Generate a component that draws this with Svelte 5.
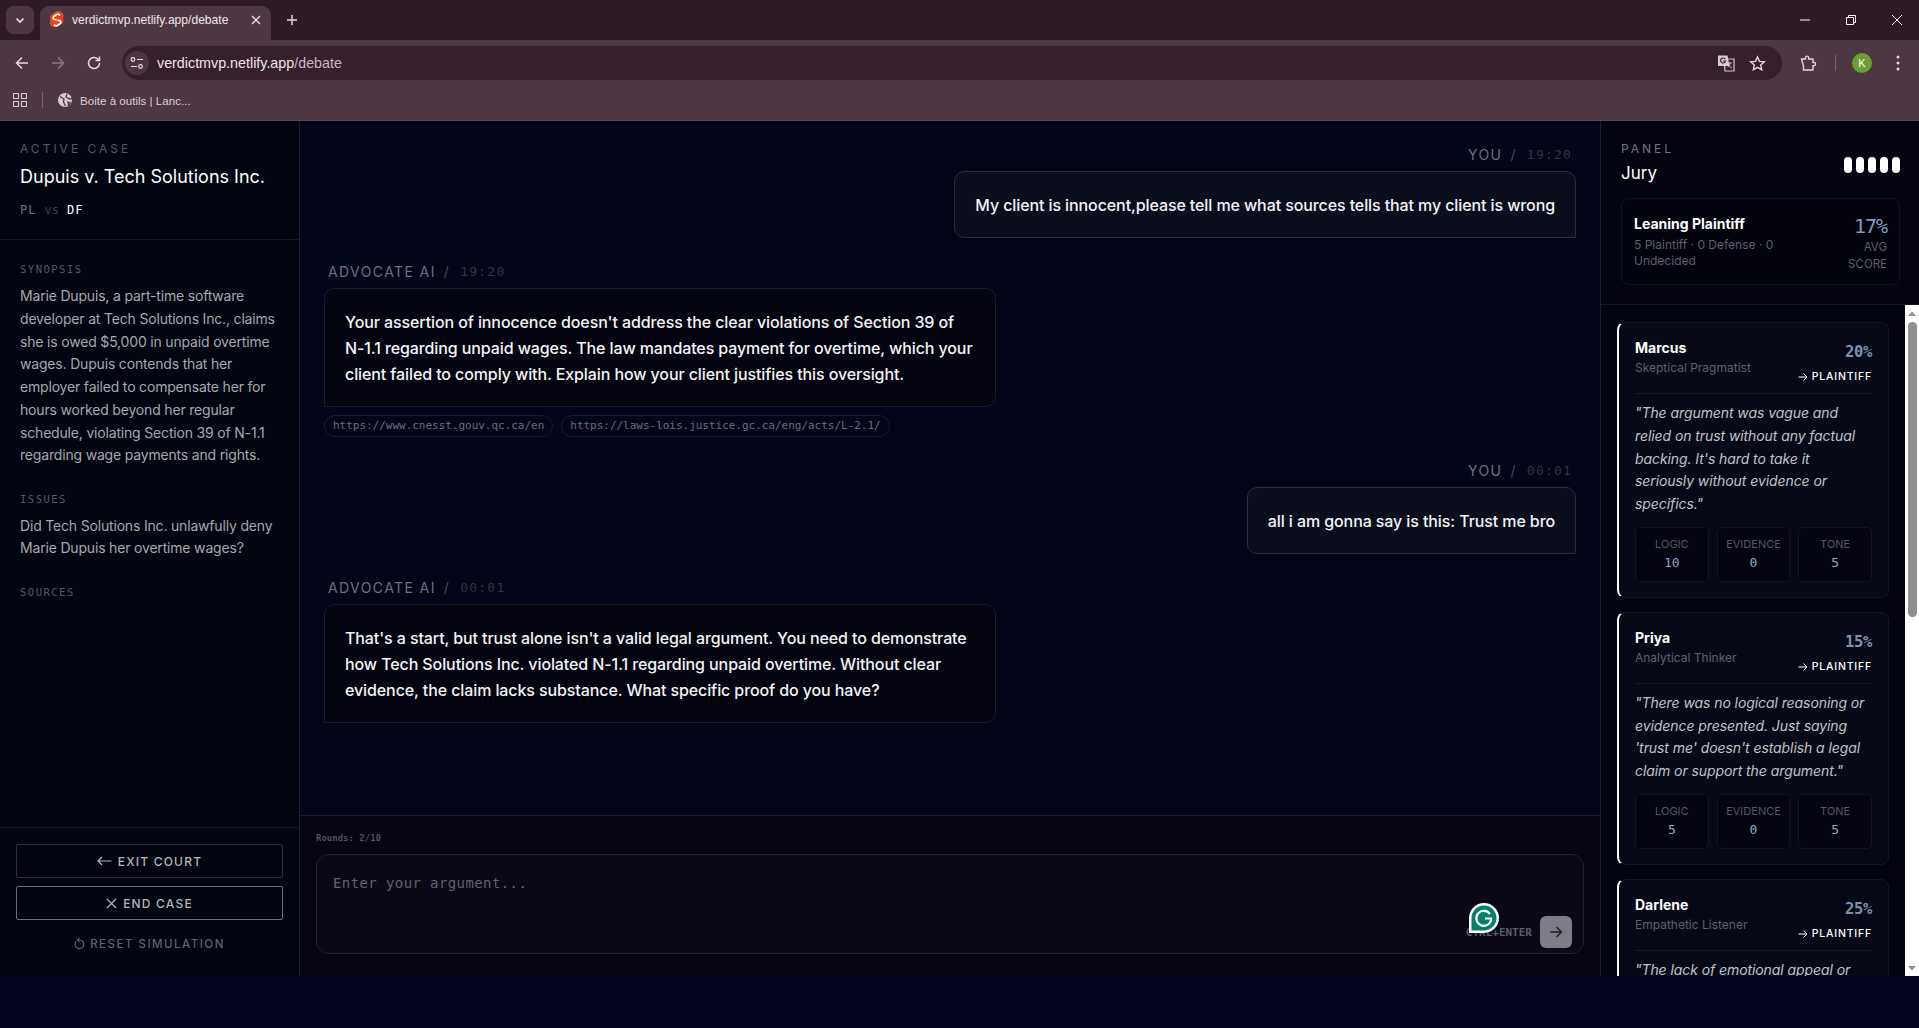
<script>
  const juror = [
    { name: 'Marcus', role: 'Skeptical Pragmatist', pct: '20%', quote: `"The argument was vague and relied on trust without any factual backing. It's hard to take it seriously without evidence or specifics."`, scores: [['LOGIC', 10], ['EVIDENCE', 0], ['TONE', 5]] },
    { name: 'Priya', role: 'Analytical Thinker', pct: '15%', quote: `"There was no logical reasoning or evidence presented. Just saying 'trust me' doesn't establish a legal claim or support the argument."`, scores: [['LOGIC', 5], ['EVIDENCE', 0], ['TONE', 5]] },
    { name: 'Darlene', role: 'Empathetic Listener', pct: '25%', quote: `"The lack of emotional appeal or`, scores: [] }
  ];
</script>

<div class="browser">
  <div class="tabstrip">
    <div class="tabsearch"><svg width="12" height="12" viewBox="0 0 12 12"><path d="M2.5 4.5 6 8l3.5-3.5" fill="none" stroke="#f0e4ea" stroke-width="1.6"/></svg></div>
    <div class="tab">
      <svg class="favicon" width="16" height="18" viewBox="0 0 16 18"><path d="M13.6 2.2C12 0 8.900-.6 6.700.8L3 3.200C1.900 3.800 1.200 4.900 1 6.100c-.2 1 0 2 .5 2.900-.3.500-.5 1-.6 1.600-.2 1.300.1 2.600.9 3.600 1.600 2.200 4.700 2.800 6.900 1.400l3.700-2.400c1.100-.6 1.800-1.700 2-2.900.2-1 0-2-.5-2.900.3-.5.5-1 .6-1.600.2-1.300-.1-2.600-.9-3.600Z" fill="#e8441f"/><path d="M11 4.500c-.9-1.200-2.500-1.500-3.700-.7L5 5.300c-1 .7-1.100 2-.2 2.800.5.400 1.500.5 2.900.4M5 13.500c.9 1.200 2.500 1.500 3.700.7l2.300-1.500c1-.7 1.100-2 .2-2.800-.5-.4-1.500-.5-2.900-.4" fill="none" stroke="#fff" stroke-width="1.700"/></svg>
      <span class="tabtitle">verdictmvp.netlify.app/debate</span>
      <svg class="tabclose" width="10" height="10" viewBox="0 0 10 10"><path d="M1 1l8 8M9 1 1 9" stroke="#f0e4ea" stroke-width="1.300"/></svg>
    </div>
    <svg class="newtab" width="12" height="12" viewBox="0 0 12 12"><path d="M6 1v10M1 6h10" stroke="#e3d5dc" stroke-width="1.500"/></svg>
    <div class="winctl">
      <svg width="12" height="12" viewBox="0 0 12 12"><path d="M1 6h10" stroke="#fff" stroke-width="1"/></svg>
      <svg width="12" height="12" viewBox="0 0 12 12"><path d="M1.500 3.500h7v7h-7zM3.500 3.500V1.500h7v7h-2" fill="none" stroke="#fff" stroke-width="1"/></svg>
      <svg width="12" height="12" viewBox="0 0 12 12"><path d="M1 1l10 10M11 1 1 11" stroke="#fff" stroke-width="1"/></svg>
    </div>
  </div>
  <div class="toolbar">
    <svg class="nav" width="16" height="16" viewBox="0 0 16 16"><path d="M14 8H2.500M8 2.500 2.500 8 8 13.500" fill="none" stroke="#e8d9e0" stroke-width="1.500"/></svg>
    <svg class="nav" width="16" height="16" viewBox="0 0 16 16"><path d="M2 8h11.500M8 2.500 13.500 8 8 13.500" fill="none" stroke="#8c7883" stroke-width="1.500"/></svg>
    <svg class="nav" width="16" height="16" viewBox="0 0 16 16"><path d="M13.500 8A5.500 5.500 0 1 1 11.800 4L13.500 5.500M13.500 1.500v4h-4" fill="none" stroke="#e8d9e0" stroke-width="1.500"/></svg>
    <div class="omnibox">
      <div class="siteicon"><svg width="16" height="16" viewBox="0 0 16 16"><circle cx="4" cy="4.500" r="1.800" fill="none" stroke="#e8d9e0" stroke-width="1.200"/><path d="M8 4.500h6M2 11.500h6" stroke="#e8d9e0" stroke-width="1.200"/><circle cx="11.500" cy="11.500" r="1.800" fill="none" stroke="#e8d9e0" stroke-width="1.200"/></svg></div>
      <span class="url">verdictmvp.netlify.app<span class="urlpath">/debate</span></span>
      <div class="omniright">
        <svg width="18" height="18" viewBox="0 0 18 18"><path d="M7 5h10v12H8Z" fill="none" stroke="#d8cad1" stroke-width="1.200"/><path d="M1 1.500h9.500l2 10.500H1Z" fill="#d8cad1"/><path d="M8.300 5.200A2.500 2.500 0 1 0 8.600 7H6" fill="none" stroke="#35202b" stroke-width="1.200"/><path d="M11 9h4M13 8.500c0 2-1 3.800-2.200 5M11.500 10.500c.6 1.500 2 3 3.500 3.500" fill="none" stroke="#d8cad1" stroke-width=".9"/></svg>
        <svg width="17" height="17" viewBox="0 0 17 17"><path d="M8.500 2l2 4.400 4.800.5-3.600 3.200 1 4.700-4.200-2.400-4.200 2.400 1-4.700L1.700 6.900l4.800-.5Z" fill="none" stroke="#e8d9e0" stroke-width="1.400"/></svg>
      </div>
    </div>
    <div class="toolright">
      <svg width="17" height="17" viewBox="0 0 17 17"><path d="M1.500 4H5.500V2.700a1.600 1.600 0 0 1 3.200 0V4H13v3.500h1a1.600 1.600 0 0 1 0 3.200h-1V15H3.500V11L1.500 4Z" fill="none" stroke="#e8d0dc" stroke-width="1.400"/></svg>
      <div class="tooldiv"></div>
      <div class="avatar">K</div>
      <svg width="4" height="16" viewBox="0 0 4 16"><circle cx="2" cy="2" r="1.500" fill="#e8d9e0"/><circle cx="2" cy="8" r="1.500" fill="#e8d9e0"/><circle cx="2" cy="14" r="1.500" fill="#e8d9e0"/></svg>
    </div>
  </div>
  <div class="bookmarks">
    <svg width="14" height="14" viewBox="0 0 14 14"><path d="M.5.500h5v5h-5zM8.500.500h5v5h-5zM.500 8.500h5v5h-5zM8.500 8.500h5v5h-5z" fill="none" stroke="#d8cad1" stroke-width="1.100"/></svg>
    <div class="bmdiv"></div>
    <svg width="14" height="14" viewBox="0 0 14 14"><circle cx="7" cy="7" r="7" fill="#d8cad1"/><path d="M2 3.500 6 6l-.5 3L7.500 13M9 1l-1 3 3.500 2 2.500-.5M10 9l2.500 1-2 2.500Z" fill="none" stroke="#4c3743" stroke-width="1.300"/></svg>
    <span class="bmtext">Boite à outils | Lanc...</span>
  </div>
</div>

<div class="app">
  <aside class="left">
    <div class="casehead">
      <div class="eyebrow">ACTIVE CASE</div>
      <h1 class="casetitle">Dupuis v. Tech Solutions Inc.</h1>
      <div class="parties"><span class="pl">PL</span><span class="vs">vs</span><span class="df">DF</span></div>
    </div>
    <div class="caseinfo">
      <div class="seclabel">SYNOPSIS</div>
      <p class="sectext">Marie Dupuis, a part-time software developer at Tech Solutions Inc., claims she is owed $5,000 in unpaid overtime wages. Dupuis contends that her employer failed to compensate her for hours worked beyond her regular schedule, violating Section 39 of N-1.1 regarding wage payments and rights.</p>
      <div class="seclabel">ISSUES</div>
      <p class="sectext">Did Tech Solutions Inc. unlawfully deny Marie Dupuis her overtime wages?</p>
      <div class="seclabel">SOURCES</div>
    </div>
    <div class="actions">
      <button class="btn"><svg width="15" height="10" viewBox="0 0 15 10"><path d="M14.500 5H1M5 1 1 5l4 4" fill="none" stroke="currentColor" stroke-width="1.200"/></svg>EXIT COURT</button>
      <button class="btn end"><svg width="11" height="11" viewBox="0 0 11 11"><path d="M1 1l9 9M10 1l-9 9" stroke="currentColor" stroke-width="1.200"/></svg>END CASE</button>
      <button class="reset"><svg width="11" height="12" viewBox="0 0 11 12"><path d="M2.200 3.500A4.300 4.300 0 1 0 5.500 2H3.800M5.500 0 3.500 2l2 2" fill="none" stroke="currentColor" stroke-width="1.200"/></svg>RESET SIMULATION</button>
    </div>
  </aside>

  <main class="center">
    <div class="messages">
      <div class="msg you">
        <div class="meta"><span class="who">YOU</span><span class="sl">/</span><span class="time">19:20</span></div>
        <div class="bubble user">My client is innocent,please tell me what sources tells that my client is wrong</div>
      </div>
      <div class="msg ai">
        <div class="meta"><span class="who">ADVOCATE AI</span><span class="sl">/</span><span class="time">19:20</span></div>
        <div class="bubble bot">Your assertion of innocence doesn't address the clear violations of Section 39 of N-1.1 regarding unpaid wages. The law mandates payment for overtime, which your client failed to comply with. Explain how your client justifies this oversight.</div>
        <div class="chips"><span class="chip">https://www.cnesst.gouv.qc.ca/en</span><span class="chip">https://laws-lois.justice.gc.ca/eng/acts/L-2.1/</span></div>
      </div>
      <div class="msg you">
        <div class="meta"><span class="who">YOU</span><span class="sl">/</span><span class="time">00:01</span></div>
        <div class="bubble user">all i am gonna say is this: Trust me bro</div>
      </div>
      <div class="msg ai">
        <div class="meta"><span class="who">ADVOCATE AI</span><span class="sl">/</span><span class="time">00:01</span></div>
        <div class="bubble bot">That's a start, but trust alone isn't a valid legal argument. You need to demonstrate how Tech Solutions Inc. violated N-1.1 regarding unpaid overtime. Without clear evidence, the claim lacks substance. What specific proof do you have?</div>
      </div>
    </div>
    <div class="composer">
      <div class="rounds">Rounds: 2/10</div>
      <div class="inputbox">
        <div class="placeholder">Enter your argument...</div>
        <div class="inputfoot">
          <span class="hint">CTRL+ENTER</span>
          <div class="send"><svg width="14" height="14" viewBox="0 0 14 14"><path d="M1.500 7h11M7.500 2l5 5-5 5" fill="none" stroke="#1a1a24" stroke-width="1.300"/></svg></div>
        </div>
        <div class="grammarly"><svg width="30" height="30" viewBox="0 0 30 30"><path d="M15 0a15 15 0 1 1 0 30H0V15A15 15 0 0 1 15 0Z" fill="#fff"/><path d="M15 2.500a12.500 12.500 0 1 1 0 25H2.500V15A12.500 12.500 0 0 1 15 2.500Z" fill="#07806a"/><path d="M21 11a7.500 7.500 0 1 0 1 6.500v-2h-6" fill="none" stroke="#fff" stroke-width="2.200"/></svg></div>
      </div>
    </div>
  </main>

  <aside class="right">
    <div class="panelhead">
      <div class="paneltop">
        <div>
          <div class="eyebrow panel">PANEL</div>
          <div class="jurytitle">Jury</div>
        </div>
        <div class="dots"><i></i><i></i><i></i><i></i><i></i></div>
      </div>
      <div class="summary">
        <div class="sumleft">
          <div class="leaning">Leaning Plaintiff</div>
          <div class="counts">5 Plaintiff · 0 Defense · 0 Undecided</div>
        </div>
        <div class="sumright">
          <div class="avg">17%</div>
          <div class="avglabel">AVG SCORE</div>
        </div>
      </div>
    </div>
    <div class="juryscroll">
      <div class="jurylist">
        {#each juror as j}
          <article class="card">
            <div class="cardhead">
              <div>
                <div class="jname">{j.name}</div>
                <div class="jrole">{j.role}</div>
              </div>
              <div class="jright">
                <div class="jpct">{j.pct}</div>
                <div class="jside"><svg width="10" height="10" viewBox="0 0 10 10"><path d="M.5 5h8.500M5.500 1.500 9 5 5.500 8.500" fill="none" stroke="#fff" stroke-width="1"/></svg>PLAINTIFF</div>
              </div>
            </div>
            <p class="quote">{j.quote}</p>
            {#if j.scores.length}
              <div class="scores">
                {#each j.scores as s}
                  <div class="score"><span class="slabel">{s[0]}</span><span class="sval">{s[1]}</span></div>
                {/each}
              </div>
            {/if}
          </article>
        {/each}
      </div>
      <div class="scrollbar">
        <svg width="14" height="14" viewBox="0 0 14 14"><path d="M7 4.500l4 4.500H3Z" fill="#8f8f8f"/></svg>
        <div class="thumb"></div>
        <svg class="down" width="14" height="14" viewBox="0 0 14 14"><path d="M7 9.500 3 5h8Z" fill="#8f8f8f"/></svg>
      </div>
    </div>
  </aside>
</div>

<style>
  :global(body) { margin: 0; background: #01041a; overflow: hidden; font-family: Inter, "Liberation Sans", sans-serif; }
  .browser { height: 120px; border-bottom: 1px solid #5a4852; background: #4c3743; color: #e8d9e0; font-family: "Liberation Sans", Arial, sans-serif; }
  .tabstrip { height: 40px; background: #2e1a25; display: flex; align-items: flex-start; position: relative; }
  .tabsearch { width: 28px; height: 28px; margin: 6px 0 0 6px; border-radius: 8px; background: #4c3743; display: flex; align-items: center; justify-content: center; }
  .tab { width: 231px; height: 34px; margin: 6px 0 0 6px; background: #4c3743; border-radius: 9px 9px 0 0; display: flex; align-items: center; padding: 0 10px 6px 9px; box-sizing: border-box; }
  .favicon { flex: none; }
  .tabtitle { font-size: 12.100px; margin-left: 7px; flex: 1; white-space: nowrap; color: #f0e4ea; }
  .newtab { margin: 14px 0 0 15px; }
  .winctl { margin-left: auto; display: flex; gap: 34px; padding: 14px 16px 0 0; }
  .toolbar { height: 46px; display: flex; align-items: center; padding-left: 14px; gap: 20px; box-sizing: border-box; background: #4c3743; border-radius: 8px 8px 0 0; }
  .nav { flex: none; }
  .omnibox { width: 1660px; flex: none; height: 34px; border-radius: 17px; background: #35202b; display: flex; align-items: center; padding: 0 13px 0 3px; box-sizing: border-box; }
  .siteicon { width: 24px; height: 24px; border-radius: 50%; background: #4c3743; display: flex; align-items: center; justify-content: center; }
  .url { margin-left: 8px; font-size: 14.300px; color: #f0e4ea; }
  .urlpath { color: #c9b8c1; }
  .omniright { margin-left: auto; display: flex; align-items: center; gap: 14px; padding-right: 3px; }
  .toolright { display: flex; align-items: center; margin-left: -2px; gap: 0; }
  .tooldiv { width: 1px; height: 16px; background: #7a6671; margin: 0 16px 0 18px; }
  .avatar { width: 20px; height: 20px; border-radius: 50%; background: #6a9f33; color: #fff; font-size: 11px; display: flex; align-items: center; justify-content: center; margin-right: 24px; }
  .bookmarks { height: 34px; display: flex; align-items: center; padding: 0 0 6px 13px; box-sizing: border-box; }
  .bmdiv { width: 1px; height: 16px; background: #7a6671; margin: 0 15px 0 15px; }
  .bmtext { font-size: 11.600px; margin-left: 8px; color: #dccfd6; }

  .app { height: 855px; display: flex; background: #020311; }
  .left { width: 300px; flex: none; box-sizing: border-box; border-right: 1px solid #1b1d2a; display: flex; flex-direction: column; background: #02040f; }
  .casehead { padding: 20px 20px 0; height: 119px; box-sizing: border-box; border-bottom: 1px solid #141623; }
  .eyebrow { font-size: 12px; letter-spacing: 3px; color: #565863; line-height: 15px; }
  .casetitle { margin: 9px 0 0; font: 400 18px/24px Inter, sans-serif; color: #fff; white-space: nowrap; }
  .parties { margin-top: 13px; font: 12px/16px "DejaVu Sans Mono", monospace; display: flex; gap: 8px; }
  .pl { color: #707380; letter-spacing: 1px; }
  .vs { color: #3a3c48; }
  .df { color: #fff; letter-spacing: 1px; }
  .caseinfo { padding: 21px 20px 0; flex: 1; }
  .seclabel { font: 10.500px/16px "DejaVu Sans Mono", monospace; letter-spacing: 1.500px; color: #555763; }
  .sectext { margin: 8px 0 23.500px; font-size: 14px; letter-spacing: -.180px; line-height: 22.750px; color: #a7a8ad; }
  .actions { border-top: 1px solid #141623; padding: 16px 16px 0; height: 149px; box-sizing: border-box; display: flex; flex-direction: column; gap: 8px; }
  .btn { height: 34px; flex: none; background: transparent; border: 1px solid #2c2e3a; border-radius: 2px; color: #b5b6ba; font: 500 12px Inter, sans-serif; letter-spacing: 1.200px; display: flex; align-items: center; justify-content: center; gap: 6px; }
  .btn.end { border-color: #6d6f7a; }
  .reset { background: none; border: 0; margin-top: 7px; color: #5f616c; font: 500 11.500px Inter, sans-serif; letter-spacing: 1.500px; display: flex; align-items: center; justify-content: center; gap: 5px; height: 18px; }

  .center { width: 1301px; flex: none; box-sizing: border-box; display: flex; flex-direction: column; background: #020517; border-right: 1px solid #1b1d2a; }
  .messages { flex: 1; padding: 25px 24px 0 24px; overflow: hidden; }
  .msg { display: flex; flex-direction: column; }
  .msg.you { align-items: flex-end; margin-bottom: 25px; }
  .msg.ai { align-items: flex-start; margin-bottom: 25px; }
  .meta { display: flex; align-items: center; gap: 8px; height: 17px; margin: 0 4px 8px 4px; font-size: 14px; letter-spacing: 1.400px; color: #6f7079; }
  .sl { color: #484a56; }
  .time { font: 13px "DejaVu Sans Mono", monospace; margin-left: 2px; color: #33353f; letter-spacing: 1.200px; }
  .bubble { box-sizing: border-box; font-size: 16px; letter-spacing: -.1px; line-height: 26px; font-weight: 500; color: #f4f4f6; }
  .user { padding: 20px; height: 67px; background: #0b0e1d; border: 1px solid #2b2e3d; border-radius: 10px 10px 0 10px; white-space: nowrap; }
  .bot { width: 672px; padding: 19.500px 20px 20px 20px; height: 119px; background: #03040f; border: 1px solid #191b29; border-radius: 10px 10px 10px 0; }
  .chips { display: flex; gap: 8px; margin-top: 8px; }
  .chip { font: 11px/20px "DejaVu Sans Mono", monospace; letter-spacing: -.020px; color: #6a6c77; border: 1px solid #191b29; border-radius: 11px; padding: 0 8px; white-space: nowrap; }
  .composer { height: 161px; box-sizing: border-box; border-top: 1px solid #1b1d2a; background: #050410; padding: 16px 16px 0; }
  .rounds { font: 600 9px/14px "DejaVu Sans Mono", monospace; color: #4e505b; margin-top: -1px; padding-bottom: 1px; }
  .inputbox { position: relative; height: 100px; margin-top: 8px; box-sizing: border-box; border: 1px solid #20222f; border-radius: 12px; background: #0a0915; padding: 18px 16px 0; }
  .placeholder { font: 14px/20px "DejaVu Sans Mono", monospace; letter-spacing: .4px; color: #60626d; }
  .inputfoot { position: absolute; right: 11px; bottom: 5px; display: flex; align-items: center; gap: 8px; }
  .hint { font: 600 11px "DejaVu Sans Mono", monospace; color: #5b5c66; }
  .send { width: 32px; height: 32px; border-radius: 6px; background: #7d7c87; display: flex; align-items: center; justify-content: center; }
  .grammarly { position: absolute; left: 1152px; top: 48px; line-height: 0; }

  .right { width: 318px; flex: none; display: flex; flex-direction: column; background: #02030f; }
  .panelhead { height: 184px; box-sizing: border-box; padding: 20px 19px 0 20px; border-bottom: 1px solid #141623; }
  .paneltop { display: flex; justify-content: space-between; align-items: center; }
  .panel { color: #74757f; }
  .jurytitle { margin-top: 5px; font: 400 17px/24px Inter, sans-serif; color: #fff; }
  .dots { display: flex; gap: 4px; padding-top: 4px; }
  .dots i { width: 8px; height: 16px; border-radius: 4px; background: #fff; }
  .summary { margin-top: 13px; height: 87px; box-sizing: border-box; border: 1px solid #11131e; border-radius: 8px; background: #01020c; padding: 15px 12px 0; display: flex; justify-content: space-between; }
  .sumleft { width: 170px; }
  .leaning { font-size: 14px; font-weight: 700; line-height: 20px; color: #fff; }
  .counts { font-size: 12px; line-height: 16px; color: #5f6069; margin-top: 3px; }
  .sumright { text-align: right; width: 50px; }
  .avg { font: 500 20px/24px "DejaVu Sans Mono", monospace; color: #7d9dbd; letter-spacing: -1px; }
  .avglabel { font-size: 11.500px; line-height: 17px; color: #5f6069; margin-top: 1px; }
  .juryscroll { flex: 1; min-height: 0; display: flex; overflow: hidden; }
  .jurylist { flex: 1; padding: 17px 16px 0 16px; display: flex; flex-direction: column; gap: 14px; overflow: hidden; }
  .card { flex: none; box-sizing: border-box; background: #070a16; border: 1px solid #13151f; border-left: 2px solid #fff; border-radius: 8px; padding: 15px 16px 15px 16px; }
  .cardhead { display: flex; justify-content: space-between; padding-bottom: 9px; border-bottom: 1px solid #171925; }
  .jname { font-size: 14px; line-height: 20px; font-weight: 700; color: #fff; }
  .jrole { font-size: 12px; line-height: 18px; color: #5f6069; margin-top: 1px; }
  .jright { text-align: right; }
  .jpct { font: 700 15.500px/18px "DejaVu Sans Mono", monospace; color: #7d93b0; margin-top: 5px; letter-spacing: -.300px; }
  .jside { font-size: 10.500px; font-weight: 500; letter-spacing: .800px; color: #fff; display: flex; align-items: center; gap: 4px; justify-content: flex-end; margin-top: 9px; line-height: 14px; }
  .quote { margin: 8px 0 11px; font-size: 14px; letter-spacing: -.080px; font-style: italic; line-height: 22.750px; color: #c2c3c8; }
  .scores { display: grid; grid-template-columns: repeat(3, 1fr); gap: 8px; }
  .score { height: 55px; box-sizing: border-box; border: 1px solid #13151f; border-radius: 5px; background: #03040f; display: flex; flex-direction: column; align-items: center; padding-top: 8px; }
  .slabel { font-size: 11px; line-height: 16px; color: #55565f; }
  .sval { font: 13px/18px "DejaVu Sans Mono", monospace; color: #8fa9c4; margin-top: 2px; }
  .scrollbar { width: 14px; flex: none; background: #fff; display: flex; flex-direction: column; align-items: center; padding-top: 2px; box-sizing: border-box; }
  .thumb { width: 9px; height: 295px; border-radius: 5px; background: #8f8f8f; margin-top: 1px; }
  .down { margin-top: auto; margin-bottom: 1px; }
</style>
